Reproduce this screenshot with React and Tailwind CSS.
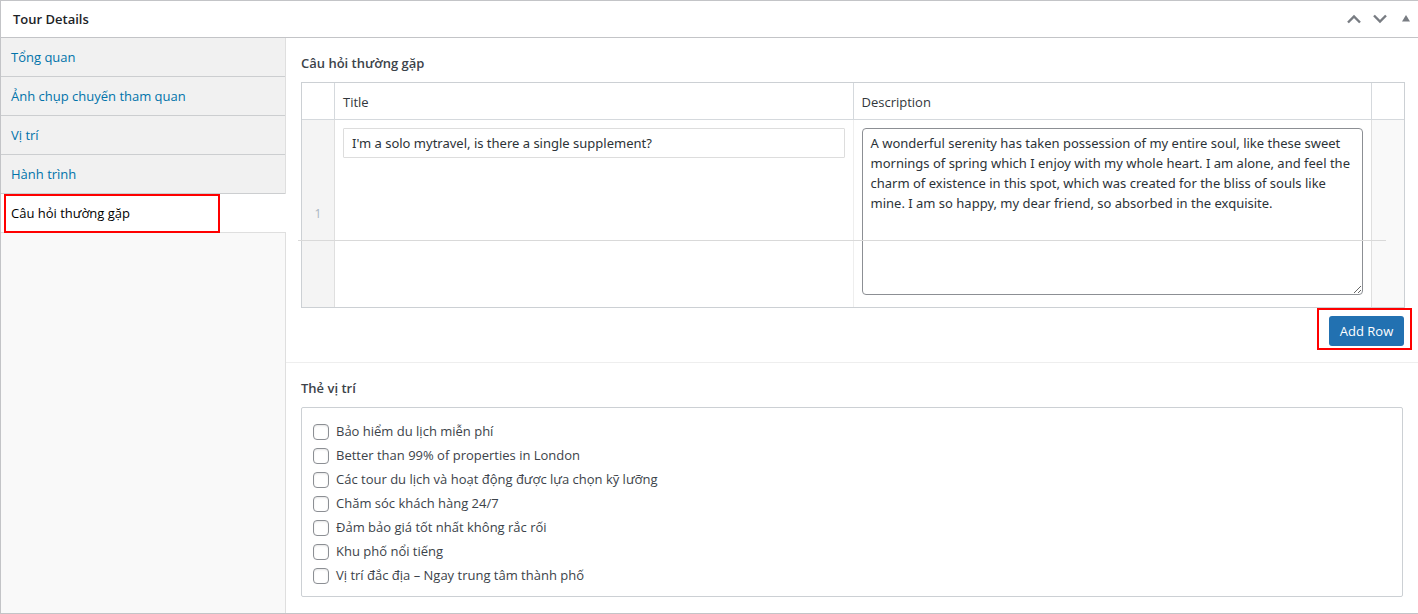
const tabs = [
  "Tổng quan",
  "Ảnh chụp chuyến tham quan",
  "Vị trí",
  "Hành trình",
  "Câu hỏi thường gặp",
];

const tags = [
  "Bảo hiểm du lịch miễn phí",
  "Better than 99% of properties in London",
  "Các tour du lịch và hoạt động được lựa chọn kỹ lưỡng",
  "Chăm sóc khách hàng 24/7",
  "Đảm bảo giá tốt nhất không rắc rối",
  "Khu phố nổi tiếng",
  "Vị trí đắc địa – Ngay trung tâm thành phố",
];

const faq = {
  title: "I'm a solo mytravel, is there a single supplement?",
  description:
    "A wonderful serenity has taken possession of my entire soul, like these sweet mornings of spring which I enjoy with my whole heart. I am alone, and feel the charm of existence in this spot, which was created for the bliss of souls like mine. I am so happy, my dear friend, so absorbed in the exquisite.",
};

function PanelHeader() {
  return (
    <header className="flex h-[37px] items-center justify-between border-b border-[#c3c4c7] pr-2 pl-3">
      <h2 className="pt-0.5 text-[13px] font-semibold text-[#1d2327]">Tour Details</h2>
      <div className="flex items-center gap-3 text-[#787c82]">
        <button type="button" aria-label="Move up">
          <svg className="block" width="14" height="10" viewBox="0 0 14 10" fill="none" stroke="currentColor" strokeWidth="2.4">
            <path d="M1 8.5 L7 2.5 L13 8.5" />
          </svg>
        </button>
        <button type="button" aria-label="Move down">
          <svg className="block" width="14" height="10" viewBox="0 0 14 10" fill="none" stroke="currentColor" strokeWidth="2.4">
            <path d="M1 1.5 L7 7.5 L13 1.5" />
          </svg>
        </button>
        <button type="button" aria-label="Toggle panel" className="pl-[3px]">
          <svg className="block" width="8" height="8" viewBox="0 0 8 8" fill="currentColor">
            <path d="M4 0 L8 6.5 H0 Z" />
          </svg>
        </button>
      </div>
    </header>
  );
}

function Sidebar() {
  return (
    <nav className="w-[285px] shrink-0 border-r border-[#dfdfdf] bg-[#f9f9f9]">
      <ul>
        {tabs.map((tab, i) =>
          i === tabs.length - 1 ? (
            <li key={tab} className="relative -mr-px border-b border-[#dfdfdf] bg-white">
              <a href="#faq" aria-current="page" className="flex h-[38px] items-center px-[10px] pt-0.5 text-[13px] text-black">
                {tab}
              </a>
              <span className="pointer-events-none absolute top-0 left-[3px] h-[39px] w-[216px] border-2 border-[#ff0000]" />
            </li>
          ) : (
            <li key={tab} className="border-b border-[#ccced0] bg-[#f1f1f1]">
              <a href="#tab" className="flex h-[38px] items-center px-[10px] pt-0.5 text-[13px] text-[#0073aa]">
                {tab}
              </a>
            </li>
          )
        )}
      </ul>
    </nav>
  );
}

function FaqField() {
  return (
    <section className="border-b border-[#eeeeee] pt-4 pr-[13px] pb-4 pl-[15px]">
      <h3 className="text-[13px] leading-[18px] font-semibold text-[#3c434a]">Câu hỏi thường gặp</h3>
      <div className="relative mt-[10px]">
        <table className="w-full table-fixed border-separate border-spacing-0 border border-[#ccd0d4] text-[13px]">
          <colgroup>
            <col className="w-[33px]" />
            <col />
            <col />
            <col className="w-8" />
          </colgroup>
          <thead>
            <tr className="h-[37px] text-left text-[#32373c]">
              <th className="border-r border-b border-[#d5d9dd]" />
              <th className="border-r border-b border-[#d5d9dd] px-2 pt-[3px] font-normal">Title</th>
              <th className="border-r border-b border-[#d5d9dd] px-2 pt-[3px] font-normal">Description</th>
              <th className="border-b border-[#d5d9dd]" />
            </tr>
          </thead>
          <tbody>
            <tr>
              <td className="border-r border-[#dfdfdf] bg-[#f4f4f4] text-center align-middle text-[12px] text-[#aab4c0]">1</td>
              <td className="border-r border-[#eeeeee] p-2 align-top">
                <input
                  type="text"
                  aria-label="Title"
                  defaultValue={faq.title}
                  className="block h-[30px] w-full rounded-[1px] border border-[#dddddd] bg-white px-2 font-['Noto_Sans',sans-serif] text-[13px] text-[#2c3338]"
                />
              </td>
              <td className="border-r border-[#dfdfdf] px-2 pt-2 pb-3 align-top">
                <textarea
                  aria-label="Description"
                  defaultValue={faq.description}
                  className="block h-[167px] w-full resize rounded-[4px] border border-[#8c8f94] bg-white px-2 py-1 font-['Noto_Sans',sans-serif] text-[13px] leading-5 text-[#2c3338]"
                />
              </td>
              <td className="bg-[#f9f9f9]" />
            </tr>
          </tbody>
        </table>
        <span className="pointer-events-none absolute top-[158px] right-[19px] -left-[3px] h-px bg-[#d9d9d9]" />
      </div>
      <div className="mt-2 flex justify-end pr-px">
        <div className="relative">
          <button type="button" className="block h-[30px] w-[75px] rounded-[3px] bg-[#2271b1] pt-0.5 text-[13px] text-white">
            Add Row
          </button>
          <span className="pointer-events-none absolute -top-2 -right-2 -bottom-1 -left-3 border-2 border-[#ff0000]" />
        </div>
      </div>
    </section>
  );
}

function TagField() {
  return (
    <section className="pt-4 pr-[15px] pb-[15px] pl-[15px]">
      <fieldset>
        <legend className="text-[13px] leading-[18px] font-semibold text-[#3c434a]">Thẻ vị trí</legend>
        <ul className="mt-[10px] rounded-[2px] border border-[#ccd0d4] px-[11px] pt-3 pb-2">
          {tags.map((tag) => (
            <li key={tag}>
              <label className="flex h-6 items-center gap-[7px] text-[13px] text-[#3c434a]">
                <input
                  type="checkbox"
                  className="size-4 shrink-0 appearance-none rounded-[4px] border border-[#8c8f94] bg-white shadow-[inset_0_1px_2px_rgba(0,0,0,0.1)]"
                />
                {tag}
              </label>
            </li>
          ))}
        </ul>
      </fieldset>
    </section>
  );
}

export default function App() {
  return (
    <div className="flex min-h-screen flex-col border-t border-b border-l border-[#c3c4c7] bg-white font-['Open_Sans','Noto_Sans',sans-serif]">
      <PanelHeader />
      <div className="flex flex-1">
        <Sidebar />
        <main className="min-w-0 flex-1">
          <FaqField />
          <TagField />
        </main>
      </div>
    </div>
  );
}
